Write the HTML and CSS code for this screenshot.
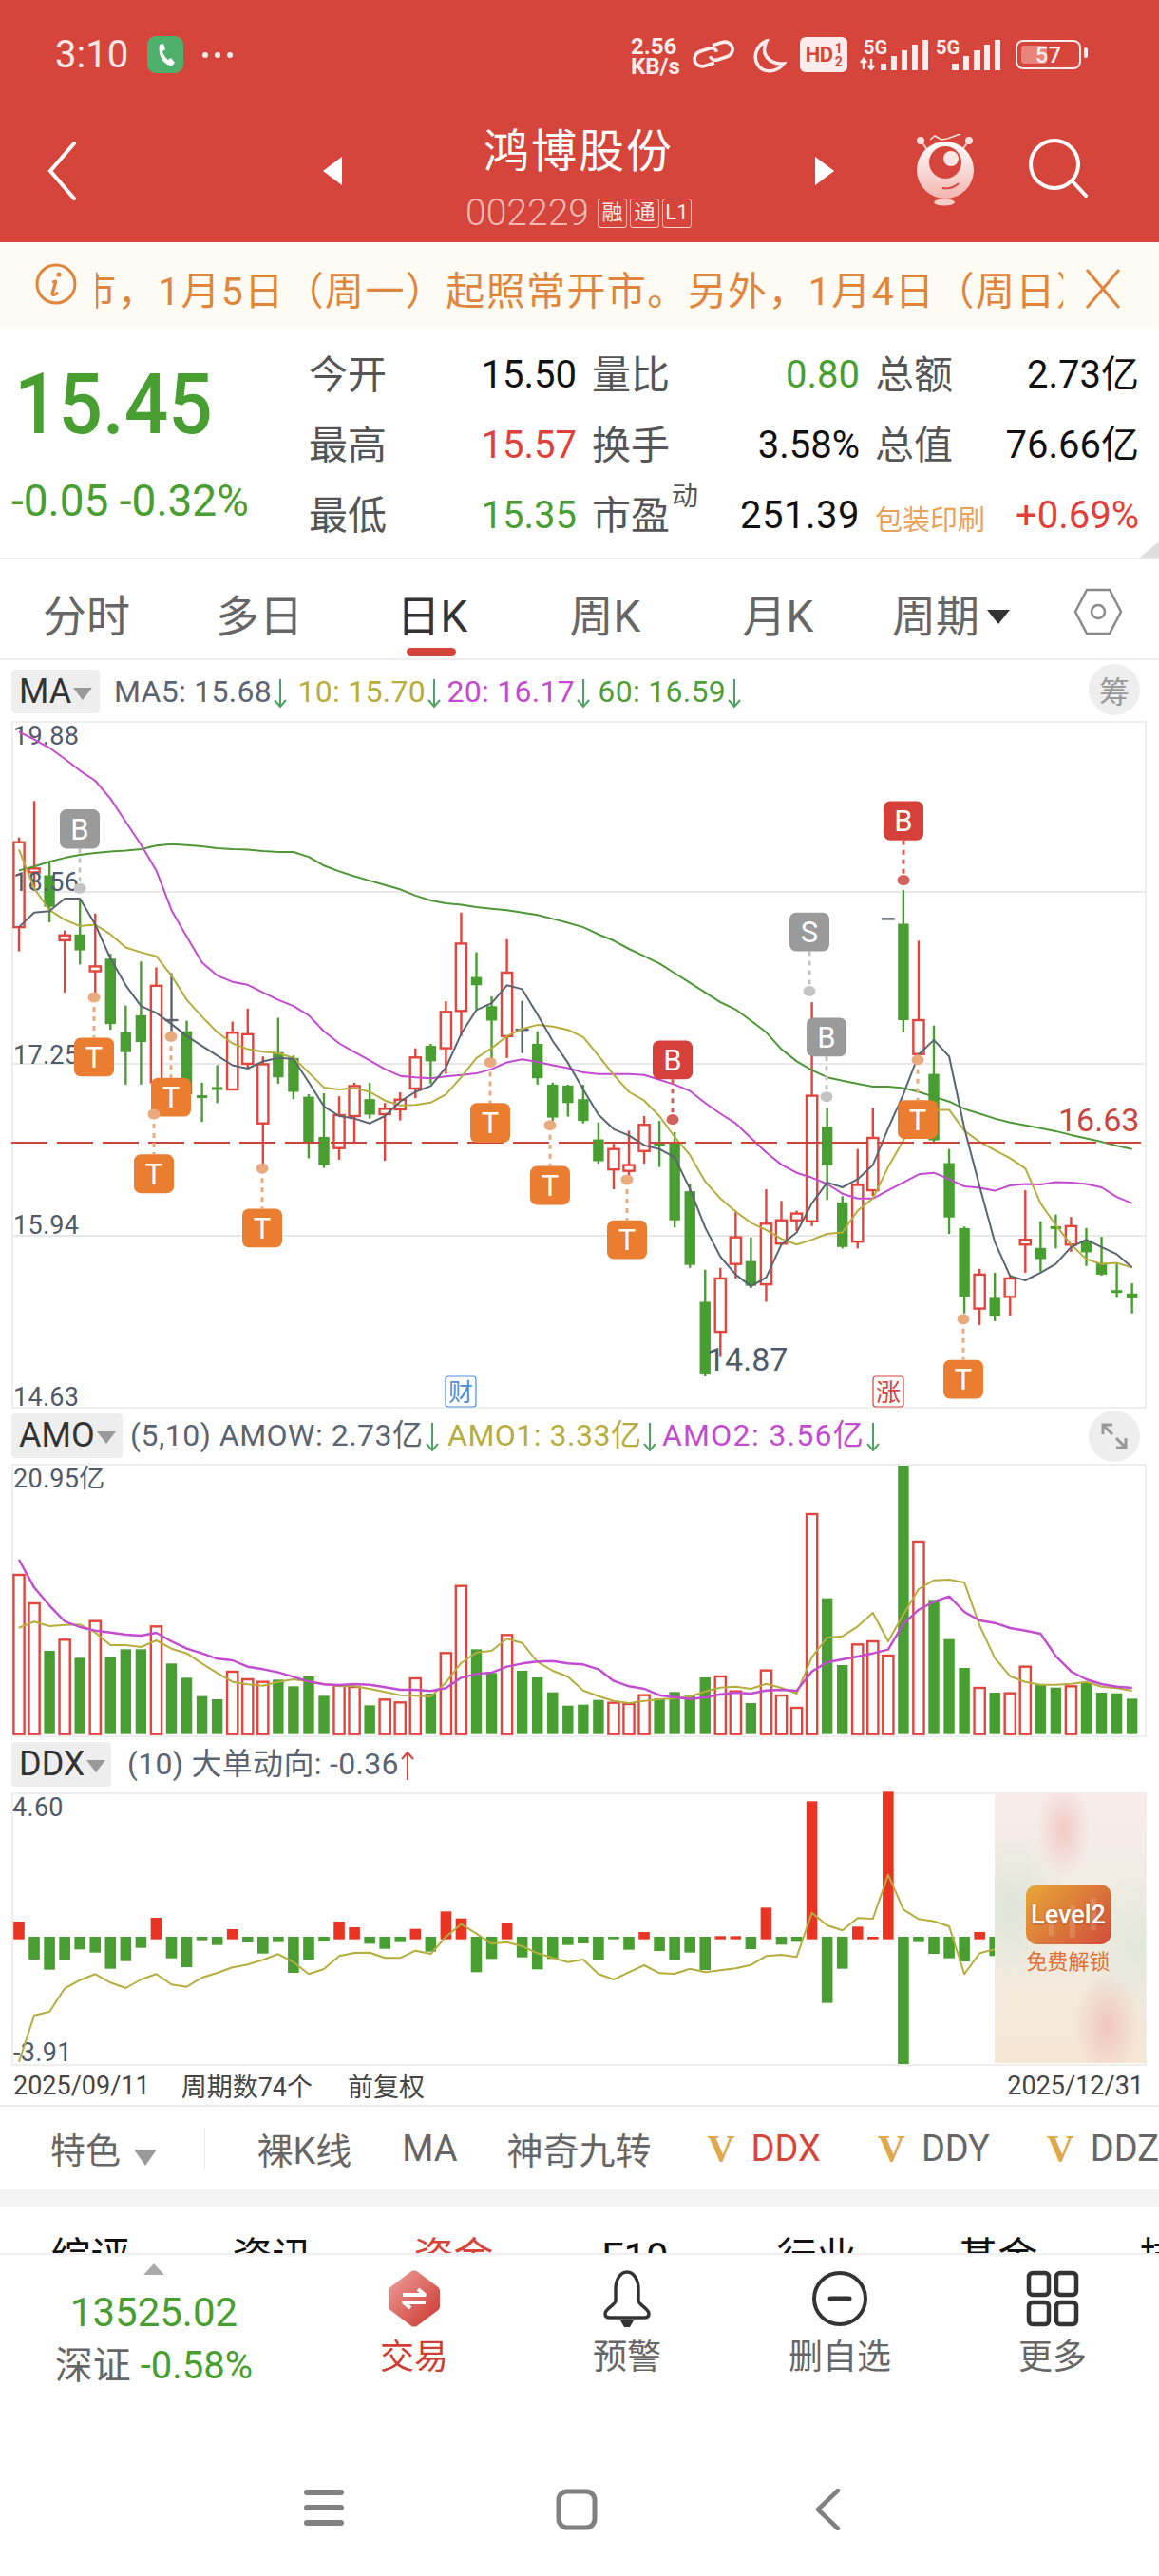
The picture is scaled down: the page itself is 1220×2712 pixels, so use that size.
FILE: index.html
```html
<!DOCTYPE html>
<html lang="zh-CN">
<head>
    <meta charset="UTF-8">
    <meta name="viewport" content="width=device-width, initial-scale=1.0">
    <title>鸿博股份</title>
    <link rel="stylesheet" href="styles.css">
</head>
<body>

    <!-- Red header -->
    <header class="app-header">
        <div class="status-bar">
            <div class="status-left">
                <span class="clock">3:10</span>
                <span class="call-pill">
                    <svg viewBox="0 0 38 39" width="38" height="39"><rect width="38" height="39" rx="9" fill="#4fb06c"/><path d="M13 9l4 -1 2 6 -3 2c1 4 3 7 6 9l3 -2 4 5 -3 3c-9 0 -15 -11 -13 -22z" fill="#fff"/></svg>
                </span>
                <span class="more-dots"><i></i><i></i><i></i></span>
            </div>
            <div class="status-right">
                <span class="net-speed">2.56<br>KB/s</span>
                <svg class="st-link" viewBox="0 0 46 32" width="46" height="32" fill="none" stroke="#fdeceb" stroke-width="3.6"><g transform="rotate(-18 23 16)"><path d="M21 25H11C5 25 2 21 2 17C2 13 5 9 11 9H20C25 9 27 12 27 15"/><path d="M25 7H35C41 7 44 11 44 15C44 19 41 23 35 23H26C21 23 19 20 19 17"/></g></svg>
                <svg class="st-moon" viewBox="0 0 36 36" width="36" height="36" fill="none" stroke="#fdeceb" stroke-width="3.6"><path d="M15 2c-11 5 -15 17 -9 26c6 8 19 8 27 -2c-9 1 -17 -3 -20 -11c-1 -4 0 -9 2 -13z"/></svg>
                <span class="hd-badge">HD<small>1<br>2</small></span>
                <span class="sim"><b>5G</b><svg viewBox="0 0 72 32" width="72" height="32"><path d="M4 20V31M1 24L4 20L7 24M12 31V20M9 27L12 31L15 27" fill="none" stroke="#fdeceb" stroke-width="2.4"/><path d="M22 25h6v7h-6zM33 17h6v15h-6zM44 11h6v21h-6zM55 5h6v27h-6zM66 0h6v32h-6z" fill="#fdeceb"/></svg></span>
                <span class="sim sim-two"><b>5G</b><svg viewBox="0 0 70 32" width="70" height="32"><path d="M19 25h7v7h-7zM31 17h6v15h-6zM42 11h7v21h-7zM53 5h6v27h-6zM64 0h6v32h-6z" fill="#fdeceb"/></svg></span>
                <span class="battery"><i></i><em>57</em></span>
            </div>
        </div>

        <div class="title-bar">
            <svg class="tb-back" viewBox="0 0 30 62" width="30" height="62" fill="none" stroke="#fff" stroke-width="4" stroke-linecap="round"><path d="M28 2L3 31L28 60"/></svg>
            <span class="tb-prev"></span>
            <div class="stock-name">
                <div class="stock-title">鸿博股份</div>
                <div class="stock-code">002229<span class="tag">融</span><span class="tag">通</span><span class="tag">L1</span></div>
            </div>
            <span class="tb-next"></span>
            <svg class="tb-mascot" viewBox="0 0 61 76" width="61" height="76">
                <defs><linearGradient id="mascotFill" x1="0" y1="0" x2="0" y2="1"><stop offset="0" stop-color="#fff"/><stop offset="1" stop-color="#f3b5b0"/></linearGradient></defs>
                <path d="M15 6l5 -4 7 4 6 -1 14 -5" fill="none" stroke="#fbe0dc" stroke-width="1.6"/>
                <path d="M5 7l8 11M56 7l-8 11" stroke="#f7d0cc" stroke-width="2"/>
                <circle cx="5" cy="7" r="4" fill="#fbe0dc"/><circle cx="56" cy="7" r="4" fill="#fbe0dc"/>
                <circle cx="31" cy="38" r="30" fill="url(#mascotFill)"/>
                <circle cx="31" cy="30" r="17" fill="#d5453c"/>
                <circle cx="37" cy="26" r="8" fill="#fbe6e4"/>
                <path d="M28 57c6 1 12 0 17 -5" fill="none" stroke="#d5453c" stroke-width="1.8"/>
                <ellipse cx="30" cy="72" rx="11" ry="3.5" fill="#f7d0cc"/>
            </svg>
            <svg class="tb-search" viewBox="0 0 62 62" width="62" height="62" fill="none" stroke="#fff" stroke-width="4" stroke-linecap="round"><circle cx="27" cy="27" r="25"/><path d="M46 45L60 60"/></svg>
        </div>
    </header>

    <!-- Scrolling notice -->
    <div class="notice">
        <svg class="notice-icon" viewBox="0 0 44 44" width="44" height="44"><circle cx="22" cy="22" r="20" fill="none" stroke="#e0863c" stroke-width="3"/><circle cx="25" cy="12" r="2.6" fill="#e0863c"/><path d="M23 19l-5 1M22 19l-4 13c0 2 2 2 6 -1" fill="none" stroke="#e0863c" stroke-width="3.2"/></svg>
        <div class="notice-text"><span>元旦休市，1月5日（周一）起照常开市。另外，1月4日（周日）不开市</span></div>
        <svg class="notice-close" viewBox="0 0 38 44" width="38" height="44" fill="none" stroke="#e0863c" stroke-width="3"><path d="M2 2L36 42M36 2L2 42"/></svg>
    </div>

    <!-- Quote -->
    <section class="quote">
        <div class="quote-main">
            <div class="price">15.45</div>
            <div class="price-change">-0.05 -0.32%</div>
        </div>
        <div class="quote-grid">
            <div class="q-row">
                <div class="q-cell"><span class="q-label">今开</span><span class="q-val">15.50</span></div>
                <div class="q-cell"><span class="q-label">量比</span><span class="q-val up-green">0.80</span></div>
                <div class="q-cell"><span class="q-label">总额</span><span class="q-val">2.73亿</span></div>
            </div>
            <div class="q-row">
                <div class="q-cell"><span class="q-label">最高</span><span class="q-val down-red">15.57</span></div>
                <div class="q-cell"><span class="q-label">换手</span><span class="q-val">3.58%</span></div>
                <div class="q-cell"><span class="q-label">总值</span><span class="q-val">76.66亿</span></div>
            </div>
            <div class="q-row">
                <div class="q-cell"><span class="q-label">最低</span><span class="q-val up-green">15.35</span></div>
                <div class="q-cell"><span class="q-label">市盈<sup>动</sup></span><span class="q-val q-val-wide">251.39</span></div>
                <div class="q-cell"><span class="q-sector">包装印刷</span><span class="q-val down-red">+0.69%</span></div>
            </div>
        </div>
        <span class="quote-corner"></span>
    </section>

    <!-- Period tabs -->
    <nav class="period-tabs">
        <span class="period-tab">分时</span>
        <span class="period-tab">多日</span>
        <span class="period-tab active">日K</span>
        <span class="period-tab">周K</span>
        <span class="period-tab">月K</span>
        <span class="period-tab">周期<i class="caret caret-dark"></i></span>
        <svg class="hex-icon" viewBox="0 0 52 50" width="52" height="50" fill="none" stroke="#8a8a8a" stroke-width="2.5"><path d="M14 2H38L50 25L38 48H14L2 25Z"/><circle cx="26" cy="25" r="7"/></svg>
    </nav>

    <!-- Price chart -->
    <div class="ind-head ind-head-ma">
        <span class="ind-pick">MA<i class="caret"></i></span>
        <span class="legend">
            <span class="lg-gray">MA5: 15.68</span><svg class="arrow" viewBox="0 0 14 32"><path d="M7 1V30M1 23L7 30L13 23"/></svg>
            <span class="lg-olive">10: 15.70</span><svg class="arrow" viewBox="0 0 14 32"><path d="M7 1V30M1 23L7 30L13 23"/></svg>
            <span class="lg-purple">20: 16.17</span><svg class="arrow" viewBox="0 0 14 32"><path d="M7 1V30M1 23L7 30L13 23"/></svg>
            <span class="lg-green">60: 16.59</span><svg class="arrow" viewBox="0 0 14 32"><path d="M7 1V30M1 23L7 30L13 23"/></svg>
        </span>
        <span class="round-btn">筹</span>
    </div>
    <div class="chart chart-price"><svg id="priceChart" viewBox="14 763 1191 720" width="1191" height="720"></svg></div>

    <!-- Turnover chart -->
    <div class="ind-head ind-head-amo">
        <span class="ind-pick">AMO<i class="caret"></i></span>
        <span class="legend">
            <span class="lg-gray">(5,10) AMOW: 2.73亿</span><svg class="arrow" viewBox="0 0 14 32"><path d="M7 1V30M1 23L7 30L13 23"/></svg>
            <span class="lg-olive">AMO1: 3.33亿</span><svg class="arrow" viewBox="0 0 14 32"><path d="M7 1V30M1 23L7 30L13 23"/></svg>
            <span class="lg-purple">AMO2: 3.56亿</span><svg class="arrow" viewBox="0 0 14 32"><path d="M7 1V30M1 23L7 30L13 23"/></svg>
        </span>
        <span class="round-btn">
            <svg viewBox="0 0 30 30" width="30" height="30" fill="none" stroke="#999" stroke-width="3"><path d="M3 13V3H13M3 3L13 13M27 17V27H17M27 27L17 17"/></svg>
        </span>
    </div>
    <div class="chart chart-amo"><svg id="amoChart" viewBox="14 1545 1191 284" width="1191" height="284"></svg></div>

    <!-- DDX chart -->
    <div class="ind-head ind-head-ddx">
        <span class="ind-pick">DDX<i class="caret"></i></span>
        <span class="legend">
            <span class="lg-gray">(10) 大单动向: -0.36</span><svg class="arrow arrow-up" viewBox="0 0 14 32"><path d="M7 31V2M1 9L7 2L13 9"/></svg>
        </span>
    </div>
    <div class="chart chart-ddx">
        <svg id="ddxChart" viewBox="14 1890 1191 284" width="1191" height="284"></svg>
        <div class="level2-mask">
            <div class="level2-btn">
                <svg viewBox="0 0 90 63" width="90" height="63"><path d="M24 30h5v24h-5zM46 22h6v34h-6zM68 14h6v34h-6z" fill="#fff" opacity="0.14"/></svg>
                <span>Level2</span>
            </div>
            <div class="level2-text">免费解锁</div>
        </div>
    </div>

    <div class="date-row">
        <span class="date-start">2025/09/11</span>
        <span class="date-count">周期数74个</span>
        <span class="date-adj">前复权</span>
        <span class="date-end">2025/12/31</span>
    </div>

    <!-- Indicator shortcuts -->
    <div class="tool-row">
        <span class="tool-first">特色<i class="caret caret-tool"></i></span>
        <span class="tool-sep"></span>
        <span class="tool-item tool-kline">裸K线</span>
        <span class="tool-item tool-ma">MA</span>
        <span class="tool-item tool-nine">神奇九转</span>
        <span class="tool-item tool-v"><b>V</b><em class="tool-on">DDX</em></span>
        <span class="tool-item tool-v"><b>V</b><em>DDY</em></span>
        <span class="tool-item tool-v"><b>V</b><em>DDZ</em></span>
    </div>
    <div class="band"></div>

    <div class="sub-tabs">
        <span>综评</span><span>资讯</span><span class="on">资金</span><span>F10</span><span>行业</span><span>基金</span><span>技术</span>
    </div>

    <!-- Bottom bar -->
    <footer class="bottom-nav">
        <div class="index-box">
            <i class="index-up"></i>
            <div class="index-val">13525.02</div>
            <div class="index-line">深证 <span>-0.58%</span></div>
        </div>
        <div class="nav-item nav-trade">
            <svg viewBox="0 0 54 60" width="54" height="60">
                <defs><linearGradient id="tradeFill" x1="0" y1="0" x2="1" y2="1"><stop offset="0" stop-color="#eda29c"/><stop offset="1" stop-color="#cb342d"/></linearGradient></defs>
                <path d="M23 2c2 -2 6 -2 8 0l20 15c2 1 3 3 3 5v16c0 2 -1 4 -3 5L31 58c-2 2 -6 2 -8 0L3 43c-2 -1 -3 -3 -3 -5V22c0 -2 1 -4 3 -5z" fill="url(#tradeFill)"/>
                <path d="M15 26H38L31 20M39 34H16L23 40" fill="none" stroke="#fff" stroke-width="4" stroke-linejoin="round"/>
            </svg>
            <span>交易</span>
        </div>
        <div class="nav-item">
            <svg viewBox="0 0 52 60" width="52" height="60"><path d="M26 2C19 2 14 10 14 20V32C14 37 3 40 3 46C3 49 5 50 8 50H44C47 50 49 49 49 46C49 40 38 37 38 32V20C38 10 33 2 26 2Z" fill="none" stroke="#333" stroke-width="3.5"/><path d="M19 53H33L29 60H23Z" fill="#333"/></svg>
            <span>预警</span>
        </div>
        <div class="nav-item">
            <svg viewBox="0 0 60 60" width="60" height="60"><circle cx="30" cy="30" r="27" fill="none" stroke="#333" stroke-width="4"/><path d="M20 30H40" stroke="#333" stroke-width="5" stroke-linecap="round"/></svg>
            <span>删自选</span>
        </div>
        <div class="nav-item">
            <svg viewBox="0 0 56 60" width="56" height="60" fill="none" stroke="#333" stroke-width="4.5"><rect x="3" y="3" width="21" height="23" rx="4"/><rect x="32" y="3" width="21" height="23" rx="4"/><rect x="3" y="34" width="21" height="23" rx="4"/><rect x="32" y="34" width="21" height="23" rx="4"/></svg>
            <span>更多</span>
        </div>
    </footer>

    <div class="system-nav">
        <svg viewBox="0 0 42 40" width="42" height="40" fill="#808080"><rect y="1" width="42" height="6" rx="3"/><rect y="17" width="42" height="6" rx="3"/><rect y="33" width="42" height="6" rx="3"/></svg>
        <svg viewBox="0 0 44 44" width="44" height="44" fill="none" stroke="#808080" stroke-width="5"><rect x="3" y="3" width="38" height="38" rx="9"/></svg>
        <svg viewBox="0 0 28 44" width="28" height="44" fill="none" stroke="#808080" stroke-width="4.5" stroke-linecap="round" stroke-linejoin="round"><path d="M25 2L4 22L25 42"/></svg>
    </div>

    <script src="chart.js"></script>
</body>
</html>
```

FILE: styles.css
```css
body {
    margin: 0;
    background: #fff;
    color: #333;
    font-family: Roboto, "Noto Sans CJK SC", sans-serif;
    width: 1220px;
    overflow-x: hidden;
}

/* Header */
.app-header {
    background-color: #d5453c;
    height: 255px;
    color: #fff;
}
.status-bar {
    height: 115px;
    box-sizing: border-box;
    padding: 38px 82px 0 58px;
    display: flex;
    justify-content: space-between;
    color: #fbe9e7;
}
.status-left {
    display: flex;
    align-items: center;
    height: 39px;
}
.clock {
    font-size: 40px;
    width: 97px;
}
.more-dots {
    display: flex;
    gap: 7px;
    margin-left: 20px;
}
.more-dots i {
    width: 6px;
    height: 6px;
    border-radius: 50%;
    background: #fbe9e7;
}
.call-pill {
    display: flex;
}
.status-right {
    display: flex;
    align-items: flex-start;
}
.net-speed {
    font-size: 24px;
    line-height: 21px;
    font-weight: 700;
    width: 60px;
    color: #fdeceb;
    margin-top: 1px;
}
.st-link {
    margin: 3px 0 0 4px;
}
.st-moon {
    margin: 3px 0 0 18px;
}
.hd-badge {
    margin: 1px 0 0 14px;
    width: 50px;
    height: 37px;
    background: #fdeceb;
    color: #d5453c;
    border-radius: 6px;
    font-size: 22px;
    font-weight: 700;
    display: flex;
    align-items: center;
    justify-content: center;
    letter-spacing: -0.5px;
}
.hd-badge small {
    font-size: 14px;
    line-height: 14px;
    margin-left: 2px;
}
.sim {
    position: relative;
    width: 72px;
    height: 32px;
    margin: 4px 0 0 13px;
    color: #fdeceb;
}
.sim-two {
    width: 70px;
    margin-left: 6px;
}
.sim b {
    position: absolute;
    left: 4px;
    top: -3px;
    font-size: 20px;
    line-height: 22px;
    font-weight: 700;
}
.sim-two b {
    left: 2px;
}
.battery {
    position: relative;
    width: 69px;
    height: 31px;
    box-sizing: border-box;
    border: 2.5px solid #fdeceb;
    border-radius: 8px;
    margin: 4px 0 0 16px;
    display: flex;
    align-items: center;
    justify-content: center;
}
.battery i {
    position: absolute;
    left: 4px;
    top: 4px;
    bottom: 4px;
    width: 27px;
    background: #e8837c;
    border-radius: 3px;
}
.battery em {
    position: relative;
    font-style: normal;
    font-size: 24px;
    font-weight: 500;
    color: #fdeceb;
}
.battery::after {
    content: "";
    position: absolute;
    right: -9px;
    top: 6px;
    width: 4px;
    height: 11px;
    background: #fdeceb;
    border-radius: 2px;
}
.title-bar {
    display: flex;
    align-items: center;
    height: 130px;
    padding-left: 50px;
}
.tb-prev {
    margin-left: 260px;
    width: 0;
    height: 0;
    border: 15px solid transparent;
    border-left: 0;
    border-right: 20px solid #fff;
}
.tb-next {
    width: 0;
    height: 0;
    border: 15px solid transparent;
    border-right: 0;
    border-left: 20px solid #fff;
}
.stock-name {
    width: 498px;
    align-self: flex-start;
    margin-top: 14px;
    text-align: center;
}
.stock-title {
    font-size: 48px;
    line-height: 62px;
    letter-spacing: 2px;
}
.stock-code {
    font-size: 39px;
    line-height: 34px;
    margin-top: 16px;
    font-weight: 300;
    color: #f3b9b4;
    display: flex;
    justify-content: center;
    align-items: center;
}
.tag {
    box-sizing: border-box;
    width: 31px;
    height: 31px;
    margin-left: 3px;
    border: 1px solid #f6d3cf;
    border-radius: 3px;
    color: #fbe9e7;
    font-size: 22px;
    font-weight: 400;
    line-height: 28px;
    text-align: center;
}
.stock-code .tag:first-of-type {
    margin-left: 9px;
}
.tb-mascot {
    margin-left: 86px;
    margin-top: -2px;
}
.tb-search {
    margin-left: 58px;
    margin-top: -6px;
}

/* Notice */
.notice {
    height: 91px;
    background: #fefaf4;
    display: flex;
    align-items: center;
    padding: 0 40px 0 37px;
    color: #e0863c;
    box-sizing: border-box;
}
.notice-icon {
    margin-top: -4px;
}
.notice-text {
    width: 1019px;
    margin-left: 20px;
    margin-top: 4px;
    overflow: hidden;
    white-space: nowrap;
    font-size: 41px;
    letter-spacing: 1.4px;
}
.notice-text span {
    display: block;
    margin-left: -147px;
}
.notice-close {
    margin: 6px 0 0 23px;
}

/* Quote */
.quote {
    position: relative;
    height: 243px;
    box-sizing: border-box;
    border-bottom: 2px solid #eee;
    display: flex;
}
.quote-main {
    width: 325px;
    flex: none;
}
.price {
    font-size: 89px;
    font-weight: 500;
    line-height: 88px;
    color: #489e30;
    margin: 36px 0 0 15px;
    transform: scaleX(0.92);
    transform-origin: left center;
}
.price-change {
    font-size: 46px;
    line-height: 50px;
    color: #489e30;
    margin: 32px 0 0 12px;
    white-space: nowrap;
}
.quote-grid {
    padding-top: 12px;
}
.q-row {
    display: flex;
    gap: 16px;
    height: 74px;
    align-items: center;
}
.q-cell {
    display: flex;
    justify-content: space-between;
    align-items: center;
    width: 282px;
}
.q-row .q-cell:last-child {
    width: 278px;
}
.q-label {
    font-size: 41px;
    color: #555;
    line-height: 50px;
    position: relative;
}
.q-label sup {
    position: absolute;
    left: 84px;
    top: -10px;
    font-size: 28px;
    line-height: 30px;
}
.q-val {
    font-size: 40px;
    color: #111;
    line-height: 50px;
}
.q-val-wide {
    letter-spacing: 0.5px;
}
.q-sector {
    font-size: 29px;
    color: #e8a25a;
    margin-top: 4px;
}
.up-green {
    color: #489e30;
}
.down-red {
    color: #e0403a;
}
.quote-corner {
    position: absolute;
    right: 0;
    bottom: 0;
    width: 0;
    height: 0;
    border-left: 20px solid transparent;
    border-bottom: 17px solid #ddd;
}

/* Period tabs */
.period-tabs {
    height: 106px;
    box-sizing: border-box;
    border-bottom: 2px solid #eee;
    display: grid;
    grid-template-columns: repeat(6, 182px) 128px;
    align-items: center;
    justify-items: center;
    padding-top: 16px;
}
.period-tab {
    font-size: 46px;
    color: #666;
    line-height: 52px;
    position: relative;
    white-space: nowrap;
}
.period-tab.active {
    color: #333;
}
.period-tab.active::after {
    content: "";
    position: absolute;
    left: 10px;
    right: 12px;
    bottom: -16px;
    height: 9px;
    background: #d5453c;
    border-radius: 5px;
}
.hex-icon {
    margin-top: -10px;
}

/* Small carets */
.caret {
    display: inline-block;
    width: 0;
    height: 0;
    border-left: 10px solid transparent;
    border-right: 10px solid transparent;
    border-top: 13px solid #999;
    margin-left: 2px;
    vertical-align: middle;
}
.caret-dark {
    border-left-width: 12px;
    border-right-width: 12px;
    border-top: 15px solid #333;
    margin-left: 8px;
    vertical-align: 8px;
}

/* Indicator heads */
.ind-head {
    height: 64px;
    box-sizing: border-box;
    padding: 10px 20px 0 12px;
    display: flex;
    align-items: flex-start;
}
.ind-pick {
    height: 46px;
    min-width: 93px;
    padding: 0 0 0 8px;
    box-sizing: border-box;
    background: #eee;
    border-radius: 4px;
    font-size: 36px;
    line-height: 46px;
    color: #333;
    white-space: nowrap;
}
.legend {
    flex: 1;
    font-size: 32px;
    line-height: 46px;
    margin-left: 15px;
    letter-spacing: 0.3px;
    white-space: nowrap;
}
.lg-gray { color: #5a6472; }
.lg-olive { color: #b5ad3e; margin-left: 1px; }
.lg-purple { color: #c24bd0; margin-left: 1px; }
.lg-green { color: #4f9e3a; margin-left: 1px; }
.ind-head-ma .lg-olive { margin-left: 3px; }
.ind-head-ma .lg-purple { margin-left: -2px; }
.ind-head-ma .lg-green { margin-left: 0; }
.arrow {
    width: 14px;
    height: 32px;
    fill: none;
    stroke: #4fa063;
    stroke-width: 2;
    vertical-align: -7px;
    margin-left: 2px;
}
.arrow-up {
    stroke: #d5453c;
}
.round-btn {
    width: 54px;
    height: 54px;
    margin-top: -6px;
    border-radius: 50%;
    background: #eee;
    color: #999;
    font-size: 32px;
    display: flex;
    align-items: center;
    justify-content: center;
}
.ind-head-amo {
    height: 58px;
    padding-top: 5px;
}
.ind-head-amo .round-btn {
    margin-top: -3px;
}
.ind-head-amo .ind-pick {
    min-width: 117px;
    height: 47px;
}
.ind-head-amo .legend {
    margin-left: 8px;
    letter-spacing: 0.5px;
}
.ind-head-amo .lg-purple {
    letter-spacing: 1.3px;
    margin-left: -3px;
}
.ind-head-ddx {
    height: 58px;
    padding-top: 5px;
}
.ind-head-ddx .ind-pick {
    min-width: 105px;
    height: 47px;
}
.ind-head-ddx .legend {
    margin-left: 17px;
}

/* Charts */
.chart {
    position: relative;
    box-sizing: border-box;
    width: 1195px;
    margin-left: 12px;
    border: 2px solid #eee;
}
.chart svg {
    display: block;
    overflow: visible;
}
.chart-price {
    height: 724px;
}
.chart-amo {
    height: 288px;
}
.chart-ddx {
    height: 288px;
}
.chart-label {
    font-family: Roboto, "Noto Sans CJK SC", sans-serif;
    font-size: 27px;
    fill: #4f5b6b;
    letter-spacing: 0.3px;
}
.marker-text {
    font-family: Roboto, sans-serif;
    font-size: 31px;
    fill: #fff;
    text-anchor: middle;
}
.limit-label {
    font-family: Roboto, sans-serif;
    font-size: 34px;
    fill: #c9453d;
}
.event-text {
    font-family: "Noto Sans CJK SC", sans-serif;
    font-size: 26px;
    text-anchor: middle;
}

/* Level2 lock over the DDX chart */
.level2-mask {
    position: absolute;
    top: -1px;
    right: -1px;
    width: 159px;
    height: 284px;
    background:
        radial-gradient(ellipse 28px 50px at 72px 38px, #f2c9c6, transparent),
        radial-gradient(ellipse 34px 55px at 118px 245px, #f0c6c0, transparent),
        radial-gradient(ellipse 60px 80px at 20px 120px, #dfe5d8, transparent),
        radial-gradient(ellipse 60px 80px at 150px 160px, #e2e8d8, transparent),
        linear-gradient(#f7ece9, #f0ece2 50%, #f6e6d4);
    display: flex;
    flex-direction: column;
    align-items: center;
    padding-top: 96px;
    box-sizing: border-box;
}
.level2-btn {
    position: relative;
    width: 90px;
    height: 63px;
    margin-right: 4px;
    border-radius: 12px;
    background: linear-gradient(135deg, #e8a838, #d04c3c);
    color: #fff;
    font-size: 27px;
    font-weight: 500;
    display: flex;
    align-items: center;
    justify-content: center;
}
.level2-btn svg {
    position: absolute;
    left: 0;
    top: 0;
}
.level2-btn span {
    position: relative;
    text-shadow: 0 1px 3px rgba(120, 40, 20, 0.4);
}
.level2-text {
    font-size: 22px;
    color: #e0703a;
    line-height: 30px;
    margin: 4px 4px 0 0;
}

/* Dates */
.date-row {
    height: 43px;
    box-sizing: border-box;
    display: flex;
    align-items: center;
    padding: 0 16px 0 14px;
    font-size: 27px;
    color: #444;
    border-bottom: 2px solid #eee;
}
.date-count {
    margin-left: 33px;
}
.date-adj {
    margin-left: 37px;
}
.date-end {
    margin-left: auto;
}

/* Shortcut row */
.tool-row {
    height: 87px;
    display: flex;
    align-items: center;
    font-size: 38px;
    color: #666;
    white-space: nowrap;
    overflow: hidden;
}
.tool-first {
    margin-left: 53px;
    width: 164px;
    font-size: 37px;
}
.caret-tool {
    border-left-width: 12px;
    border-right-width: 12px;
    border-top: 17px solid #999;
    margin-left: 14px;
    vertical-align: -2px;
}
.tool-sep {
    width: 1px;
    height: 44px;
    background: #eee;
}
.tool-kline { margin-left: 54px; }
.tool-ma { margin-left: 53px; }
.tool-nine { margin-left: 52px; }
.tool-v {
    margin-left: 57px;
    display: flex;
    align-items: center;
}
.tool-v b {
    font-family: "Liberation Serif", serif;
    font-size: 40px;
    color: #e0a84c;
    width: 48px;
    padding-left: 2px;
    box-sizing: border-box;
}
.tool-v em {
    font-style: normal;
}
.tool-v .tool-on {
    color: #d5453c;
}
.tool-v + .tool-v {
    margin-left: 58px;
}
.band {
    height: 18px;
    background: #f4f4f4;
}

/* Section tabs, cut off by the bottom bar */
.sub-tabs {
    height: 49px;
    overflow: hidden;
    display: grid;
    grid-template-columns: repeat(7, 191px);
    justify-items: center;
    padding-top: 28px;
    box-sizing: border-box;
    font-size: 42px;
    line-height: 52px;
    color: #111;
    white-space: nowrap;
}
.sub-tabs .on {
    color: #d5453c;
}

/* Bottom bar */
.bottom-nav {
    height: 218px;
    box-sizing: border-box;
    border-top: 2px solid #eee;
    display: grid;
    grid-template-columns: 324px repeat(4, 224px);
}
.index-box {
    display: flex;
    flex-direction: column;
    align-items: center;
    position: relative;
}
.index-up {
    margin-top: 9px;
    width: 0;
    height: 0;
    border-left: 11px solid transparent;
    border-right: 11px solid transparent;
    border-bottom: 12px solid #aaa;
}
.index-val {
    font-size: 42px;
    line-height: 44px;
    color: #489e30;
    margin-top: 18px;
}
.index-line {
    font-size: 40px;
    line-height: 48px;
    margin-top: 10px;
    color: #666;
    white-space: nowrap;
}
.index-line span {
    color: #489e30;
}
.nav-item {
    display: flex;
    flex-direction: column;
    align-items: center;
    padding-top: 16px;
    font-size: 36px;
    color: #666;
}
.nav-item svg {
    display: block;
    height: 60px;
}
.nav-item span {
    line-height: 44px;
    margin-top: 10px;
}
.nav-trade span {
    color: #cf3d35;
}

/* Android nav */
.system-nav {
    height: 122px;
    display: flex;
    align-items: flex-start;
    padding: 30px 0 0 320px;
    box-sizing: border-box;
}
.system-nav svg:nth-child(2) {
    margin-left: 223px;
}
.system-nav svg:nth-child(3) {
    margin-left: 228px;
}
```

FILE: chart.js
```js
const NS = "http://www.w3.org/2000/svg";
const RED = "#e2453c";
const GREEN = "#489e30";
const DARK = "#5a6472";
const OLIVE = "#b5ad3e";
const PURPLE = "#c24bd0";
const MA60 = "#4f9637";

// candle centre for bar i
const barX = i => 20 + 16.05 * i;

function add(svg, tag, attrs, text) {
    const el = document.createElementNS(NS, tag);
    for (const k in attrs) el.setAttribute(k, attrs[k]);
    if (text) el.textContent = text;
    svg.appendChild(el);
    return el;
}

function line(svg, values, toY, color, width) {
    const pts = values.map((v, i) => barX(i).toFixed(1) + "," + toY(v).toFixed(1)).join(" ");
    add(svg, "polyline", { points: pts, fill: "none", stroke: color, "stroke-width": width || 2, "stroke-linejoin": "round" });
}

/* ---------- price chart ---------- */
// [kind, bodyTop, bodyBottom, high, low], y values measured off a trace, see priceY
const candles = [
    ["r",370,545,360,595],["r",424,432,285,470],["g",438,503,410,535],["r",562,572,552,680],["g",560,593,490,622],
    ["r",626,636,517,690],["g",610,745,600,757],["g",762,803,707,870],["g",727,782,616,870],["r",666,865,628,870],
    ["d",737,737,640,760],["g",760,890,738,890],["g",892,897,866,947],["g",875,881,830,908],["r",763,880,740,880],
    ["r",766,827,713,836],["r",828,950,812,1040],["g",803,855,732,868],["g",815,885,810,900],["g",895,988,890,1022],
    ["g",978,1036,888,1042],["r",933,1001,894,1025],["r",873,935,866,992],["g",900,932,866,940],["r",920,931,908,1027],
    ["r",901,921,886,944],["r",814,878,795,898],["g",790,822,786,868],["r",720,795,698,848],["r",579,718,515,770],
    ["g",648,665,597,715],["g",708,738,688,825],["r",639,770,570,815],["d",757,757,697,805],["g",786,857,760,870],
    ["g",870,938,866,945],["g",872,908,870,936],["g",900,945,870,950],["g",983,1028,948,1033],["r",1003,1045,992,1086],
    ["r",1036,1048,965,1060],["r",953,1007,935,1033],["g",990,995,945,1040],["g",990,1150,968,1165],["g",1090,1242,1075,1248],
    ["g",1318,1468,1252,1472],["r",1270,1380,1248,1432],["r",1185,1240,1130,1270],["g",1234,1285,1185,1290],["r",1157,1282,1086,1318],
    ["r",1150,1198,1110,1200],["r",1136,1150,1130,1172],["r",893,1152,700,1162],["g",957,1037,918,1108],["g",1113,1205,1100,1208],
    ["r",1077,1194,1003,1208],["r",980,1088,918,1100],["d",528,528,528,528],["g",538,737,468,762],["r",737,807,573,812],
    ["g",848,985,748,988],["g",1032,1144,1003,1178],["g",1166,1308,1163,1342],["r",1262,1332,1250,1366],["g",1310,1348,1258,1358],
    ["r",1270,1308,1262,1347],["r",1190,1200,1088,1258],["g",1207,1230,1152,1256],["g",1162,1166,1138,1208],["r",1162,1200,1143,1215],
    ["g",1192,1216,1166,1244],["g",1238,1262,1184,1264],["g",1294,1298,1240,1310],["g",1301,1311,1280,1342]
];
const ma5 = [545,515,512,486,486,540,610,665,708,722,745,770,790,810,830,837,822,815,817,865,915,935,940,950,935,905,885,873,835,765,716,702,665,673,725,780,825,880,932,962,975,995,1003,1020,1085,1165,1225,1262,1286,1268,1200,1175,1115,1072,1082,1065,1036,960,890,808,778,812,960,1080,1195,1265,1274,1258,1240,1205,1190,1205,1220,1247];
const ma10 = [385,465,510,530,543,540,560,587,597,605,645,695,730,762,785,797,802,805,815,845,876,880,877,885,903,913,912,907,890,855,815,795,770,755,747,750,757,772,810,850,885,903,935,978,1015,1070,1105,1132,1155,1170,1188,1200,1190,1178,1175,1130,1105,1040,985,945,922,922,965,988,1005,1022,1043,1115,1160,1200,1230,1240,1238,1247];
const ma20 = [142,158,175,198,222,243,280,328,375,428,510,565,618,645,658,664,680,695,708,727,760,785,803,820,838,852,855,857,853,850,847,838,824,818,823,830,836,845,848,848,848,850,860,870,883,908,930,950,980,1010,1035,1052,1062,1075,1095,1105,1105,1088,1072,1055,1052,1065,1080,1083,1089,1078,1075,1076,1071,1072,1075,1082,1102,1115];
const ma60 = [428,420,410,402,396,392,389,387,384,377,374,376,378,382,384,385,388,390,390,400,418,430,440,449,458,467,480,490,496,499,504,507,510,515,520,528,536,545,560,573,590,605,620,640,660,680,700,715,738,762,797,822,840,855,862,868,874,874,877,885,895,905,920,930,940,948,954,960,966,974,981,988,996,1003];

// [letter, box colour, dot colour, x, box top, box bottom, dot y], same trace as candles
const markers = [
    ["B","#9a9a9a","#c4c4c4",84,302,383,465],
    ["T","#ea7d30","#e9ab7e",99,773,853,690],
    ["T","#ea7d30","#e9ab7e",180,856,936,771],
    ["T","#ea7d30","#e9ab7e",162,1014,1094,931],
    ["T","#ea7d30","#e9ab7e",276,1126,1206,1043],
    ["T","#ea7d30","#e9ab7e",516,908,990,824],
    ["T","#ea7d30","#e9ab7e",579,1038,1118,954],
    ["T","#ea7d30","#e9ab7e",660,1150,1230,1066],
    ["B","#d5403a","#d4605c",708,779,859,942],
    ["S","#9a9a9a","#c4c4c4",852,515,595,677],
    ["B","#9a9a9a","#c4c4c4",870,732,812,895],
    ["B","#d5403a","#d4605c",951,285,366,448],
    ["T","#ea7d30","#e9ab7e",966,902,982,819],
    ["T","#ea7d30","#e9ab7e",1014,1438,1518,1354]
];

function drawPrice() {
    const svg = document.getElementById("priceChart");
    const priceY = v => 700 + v / 1.96;

    [941, 1122, 1303].forEach(y => add(svg, "line", { x1: 14, x2: 1205, y1: y, y2: y, stroke: "#e8e8e8", "stroke-width": 2 }));

    candles.forEach((c, i) => {
        const x = barX(i);
        const color = c[0] === "r" ? RED : c[0] === "g" ? GREEN : DARK;
        if (c[3] !== c[4]) {
            add(svg, "line", { x1: x, x2: x, y1: priceY(c[3]), y2: priceY(c[4]), stroke: color, "stroke-width": 2.4 });
        }
        if (c[0] === "d") {
            add(svg, "line", { x1: x - 7, x2: x + 7, y1: priceY(c[1]), y2: priceY(c[1]), stroke: color, "stroke-width": 2.4 });
        } else if (c[0] === "r") {
            add(svg, "rect", { x: x - 5.6, y: priceY(c[1]), width: 11.2, height: priceY(c[2]) - priceY(c[1]), fill: "#fff", stroke: color, "stroke-width": 2.4 });
        } else {
            add(svg, "rect", { x: x - 5.7, y: priceY(c[1]), width: 11.4, height: Math.max(priceY(c[2]) - priceY(c[1]), 3), fill: color });
        }
    });

    // axis values sit on top of the candles
    [["19.88", 787], ["18.56", 941], ["17.25", 1123], ["15.94", 1302], ["14.63", 1483]].forEach(l => {
        add(svg, "text", { x: 14, y: l[1] - 1, class: "chart-label" }, l[0]);
    });

    line(svg, ma60, priceY, MA60);
    line(svg, ma20, priceY, PURPLE);
    line(svg, ma10, priceY, OLIVE);
    line(svg, ma5, priceY, DARK);

    // 16.63 reference line
    add(svg, "line", { x1: 12, x2: 1201, y1: 1205, y2: 1205, stroke: "#c9453d", "stroke-width": 2, "stroke-dasharray": "38 10" });
    add(svg, "text", { x: 1114, y: 1193, class: "limit-label" }, "16.63");
    add(svg, "text", { x: 744, y: 1445, class: "limit-label", style: "fill:#4f5b6b" }, "14.87");

    markers.forEach(m => {
        const top = priceY(m[4]), bottom = priceY(m[5]), dot = priceY(m[6]);
        const x = m[3];
        add(svg, "line", { x1: x, x2: x, y1: dot < top ? dot : bottom, y2: dot < top ? top : dot, stroke: m[2], "stroke-width": 3, "stroke-dasharray": "5 5" });
        add(svg, "ellipse", { cx: x, cy: dot, rx: 6.5, ry: 5.5, fill: m[2] });
        add(svg, "rect", { x: x - 21, y: top, width: 42, height: bottom - top, rx: 7, fill: m[1] });
        add(svg, "text", { x: x, y: (top + bottom) / 2 + 11, class: "marker-text" }, m[0]);
    });

    // event tags along the bottom
    [["财", 485, "#4f8fd8"], ["涨", 935, "#d5453c"]].forEach(t => {
        add(svg, "rect", { x: t[1] - 16, y: 1451, width: 32, height: 32, rx: 3, fill: "#fff", stroke: t[2], "stroke-width": 1.2 });
        add(svg, "text", { x: t[1], y: 1477, class: "event-text", style: "fill:" + t[2] }, t[0]);
    });
}

/* ---------- turnover chart ---------- */
const amoBars = [
    ["r",540],["r",630],["g",780],["r",745],["g",802],["r",686],["g",798],["g",775],["g",775],["r",703],
    ["g",820],["g",865],["g",923],["g",933],["r",846],["r",870],["r",878],["g",871],["g",892],["g",861],
    ["g",922],["r",890],["r",894],["g",952],["r",934],["r",943],["r",867],["g",915],["r",787],["r",575],
    ["g",775],["g",850],["r",730],["g",843],["g",864],["g",911],["g",953],["g",950],["g",935],["r",944],
    ["r",948],["r",920],["g",930],["g",910],["g",922],["g",864],["r",861],["r",908],["g",945],["r",842],
    ["r",921],["r",960],["r",348],["g",614],["g",825],["r",760],["r",750],["r",795],["g",195],["r",435],
    ["g",619],["g",743],["g",834],["r",897],["g",912],["r",914],["r",830],["g",887],["g",896],["r",892],
    ["g",880],["g",912],["g",914],["g",931]
];
const amo1 = [707,688,702,698,697,722,762,762,768,747,773,788,820,850,878,886,890,878,870,877,885,892,892,900,910,920,922,925,880,818,785,780,742,755,815,843,862,905,923,938,945,938,933,930,925,908,896,893,900,884,897,915,800,738,734,703,660,750,665,585,557,555,564,700,803,860,878,887,887,884,878,893,898,906];
const amo2 = [492,580,637,687,705,716,722,729,732,723,750,773,788,805,810,830,838,848,862,877,886,888,885,887,895,903,903,907,898,865,853,849,830,820,814,812,820,823,838,875,892,900,920,926,932,927,917,912,915,905,903,906,845,816,807,798,788,776,695,650,625,608,657,684,692,708,716,726,797,845,870,885,893,897];

function drawAmo() {
    const svg = document.getElementById("amoChart");
    const amoY = v => 1480 + v / 3;
    const base = amoY(1043);

    amoBars.forEach((b, i) => {
        const x = barX(i), y = amoY(b[1]);
        if (b[0] === "r") {
            add(svg, "rect", { x: x - 5.6, y: y, width: 11.2, height: base - y, fill: "#fff", stroke: RED, "stroke-width": 2.4 });
        } else {
            add(svg, "rect", { x: x - 5.7, y: y, width: 11.4, height: base - y, fill: GREEN });
        }
    });

    add(svg, "text", { x: 14, y: 1568, class: "chart-label" }, "20.95亿");
    line(svg, amo1, amoY, OLIVE);
    line(svg, amo2, amoY, PURPLE, 2.4);
}

/* ---------- DDX chart ---------- */
// red bars go up to v, green bars go down to v
const ddxBars = [
    ["r",432],["g",552],["g",584],["g",555],["g",520],["g",530],["g",581],["g",557],["g",515],["r",420],
    ["g",548],["g",576],["g",491],["g",506],["r",456],["g",498],["g",533],["g",497],["g",594],["g",553],
    ["g",495],["r",432],["r",450],["g",502],["g",518],["g",497],["r",455],["g",527],["r",400],["r",422],
    ["g",592],["g",550],["r",435],["g",545],["g",583],["g",550],["g",506],["g",501],["g",554],["g",488],
    ["g",521],["r",465],["g",525],["g",554],["g",530],["g",585],["r",478],["r",478],["g",519],["r",388],
    ["g",505],["g",496],["r",52],["g",689],["g",581],["r",448],["r",480],["r",22],["g",882],["g",497],
    ["g",534],["g",548],["g",558],["r",465],["g",541]
];
const ddxLine = [875,728,717,643,617,598,625,642,615,598,631,638,609,594,577,568,553,535,560,598,582,541,531,530,547,547,524,534,480,440,470,502,497,510,532,547,560,552,598,615,592,570,595,597,581,592,586,580,569,541,537,544,404,444,460,421,423,284,394,424,431,447,598,532,520];

function drawDdx() {
    const svg = document.getElementById("ddxChart");
    const ddxY = v => 1880 + v / 3;

    add(svg, "text", { x: 13, y: 1913, class: "chart-label" }, "4.60");
    add(svg, "text", { x: 14, y: 2171, class: "chart-label" }, "-3.91");

    ddxBars.forEach((b, i) => {
        const x = barX(i) - 5.8;
        if (b[0] === "r") {
            const top = ddxY(b[1]), bottom = ddxY(488);
            add(svg, "rect", { x: x, y: top, width: 11.6, height: bottom - top, fill: "#e93323" });
        } else {
            const top = ddxY(480), bottom = ddxY(b[1]);
            add(svg, "rect", { x: x, y: top, width: 11.6, height: bottom - top, fill: GREEN });
        }
    });

    line(svg, ddxLine, ddxY, OLIVE);
}

drawPrice();
drawAmo();
drawDdx();
```
